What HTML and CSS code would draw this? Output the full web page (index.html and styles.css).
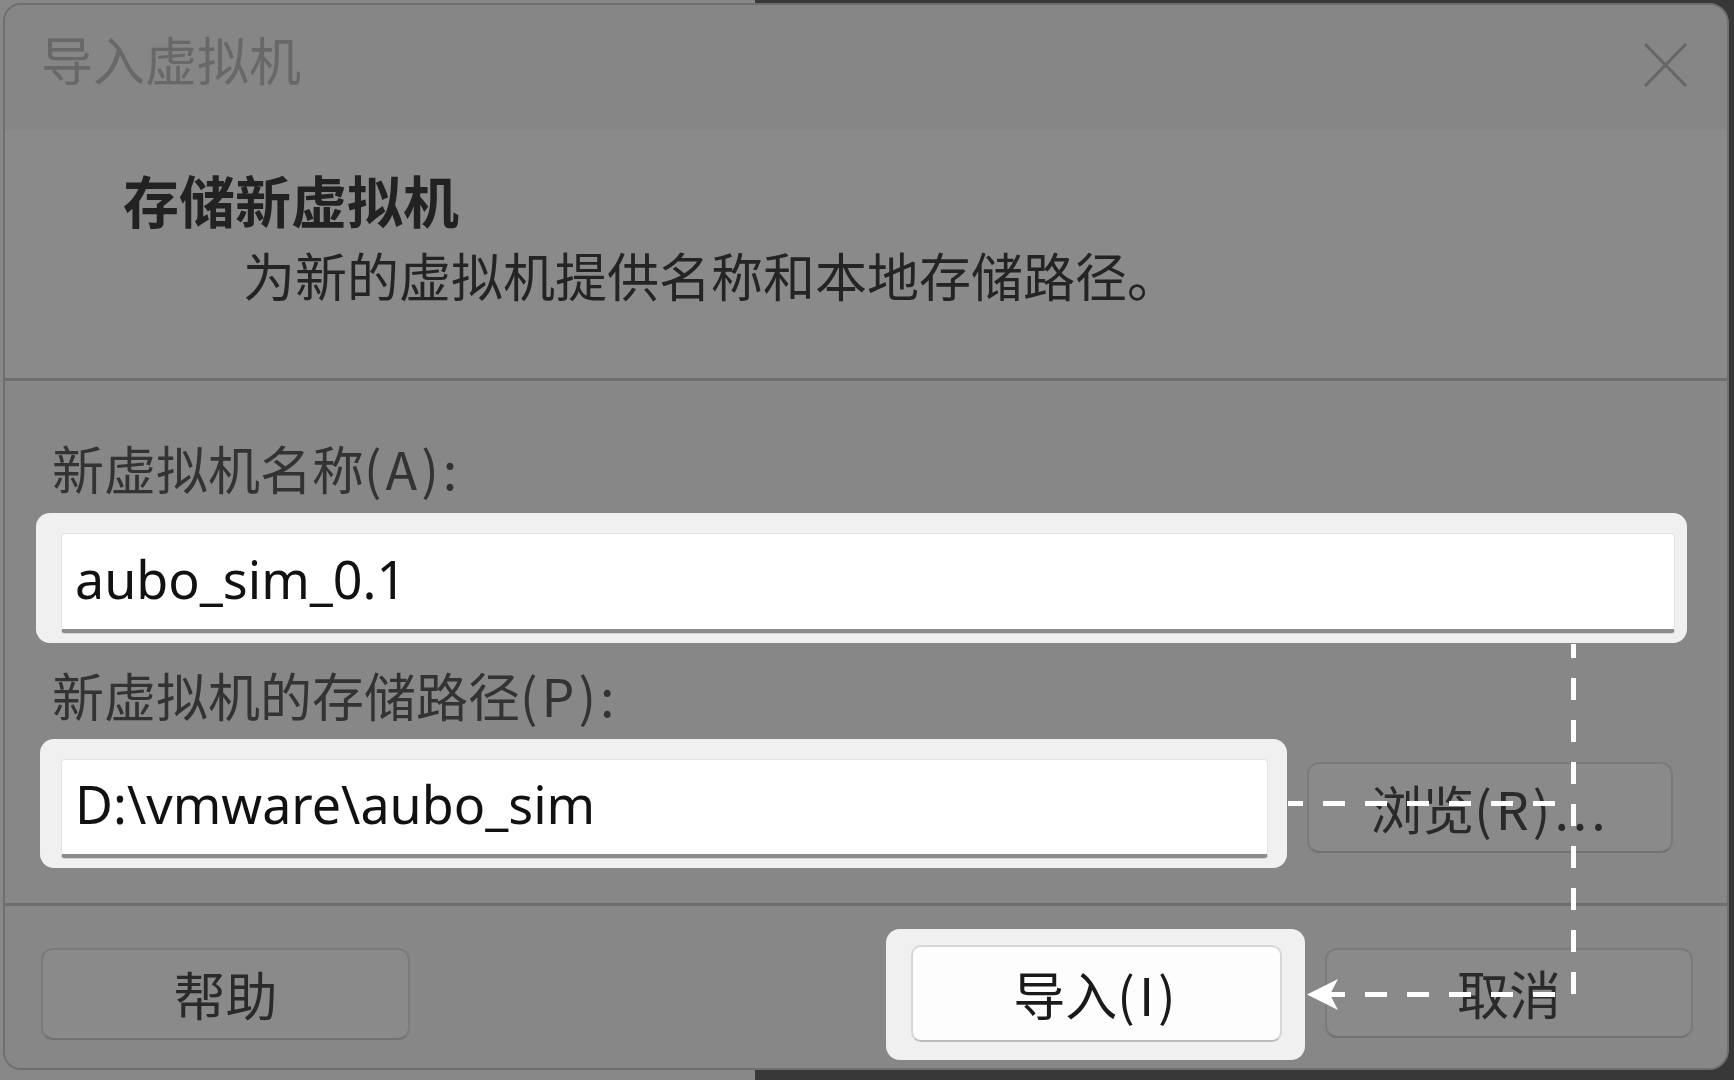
FILE: index.html
```html
<!DOCTYPE html>
<html lang="zh-CN">
<head>
<meta charset="utf-8">
<title>导入虚拟机</title>
<link rel="stylesheet" href="styles.css">
</head>
<body>
<div class="screen">
  <div class="dialog">
    <div class="titlebar">
      <span class="title">导入虚拟机</span>
      <svg class="close" width="45" height="44" viewBox="0 0 45 44"><path d="M2 1 L43 43 M43 1 L2 43" stroke="#666" stroke-width="3" fill="none"/></svg>
    </div>
    <div class="header">
      <div class="heading">存储新虚拟机</div>
      <div class="sub">为新的虚拟机提供名称和本地存储路径。</div>
    </div>
    <div class="content">
      <div class="label">新虚拟机名称<span class="key">(A):</span></div>
      <div class="hl hl-name"><div class="input">aubo_sim_0.1</div></div>
      <div class="label label-path">新虚拟机的存储路径<span class="key">(P):</span></div>
      <div class="path-row">
        <div class="hl hl-path"><div class="input">D:\vmware\aubo_sim</div></div>
        <div class="btn btn-browse">浏览<span class="key">(R)...</span></div>
      </div>
    </div>
    <div class="footer">
      <div class="btn btn-help">帮助</div>
      <div class="hl hl-import"><div class="btn-primary">导入<span class="key">(I)</span></div></div>
      <div class="btn btn-cancel">取消</div>
    </div>
  </div>
  <svg class="annot" width="1734" height="1080" viewBox="0 0 1734 1080">
    <g stroke="#fff" stroke-width="5" fill="none">
      <path d="M1555 803.5 H1288" stroke-dasharray="22 20"/>
      <path d="M1573.5 644 V994" stroke-dasharray="22 20" stroke-dashoffset="8"/>
      <path d="M1555 994.5 H1320" stroke-dasharray="22 20"/>
    </g>
    <path d="M1307 994.5 L1338 979 L1330 994.5 L1338 1010 Z" fill="#fff"/>
  </svg>
</div>
</body>
</html>
```
FILE: styles.css
```css
html, body {
  margin: 0;
  padding: 0;
}
body {
  width: 1734px;
  height: 1080px;
  overflow: hidden;
  font-family: "Noto Sans CJK SC", "Noto Sans", sans-serif;
}
.screen {
  position: relative;
  width: 1734px;
  height: 1080px;
  box-sizing: border-box;
  padding: 3px 0 0 3px;
  background: linear-gradient(90deg, #888888 0, #888888 755px, #383838 755px);
}
.dialog {
  width: 1726px;
  height: 1067px;
  box-sizing: border-box;
  border: 2px solid #6f6f6f;
  border-radius: 18px 20px 20px 18px;
  background: #878787;
  overflow: hidden;
  display: flex;
  flex-direction: column;
}
.titlebar {
  height: 125px;
  box-sizing: border-box;
  padding: 28px 39px 0 36px;
  display: flex;
  justify-content: space-between;
  align-items: flex-start;
  background: #868686;
}
.title {
  font-size: 52px;
  line-height: 52px;
  color: #686868;
}
.close {
  margin-top: 10px;
  display: block;
}
.header {
  padding: 41px 0 0 118px;
  box-sizing: border-box;
  height: 251px;
  background: #8a8a8a;
  border-bottom: 3px solid #6e6e6e;
}
.heading {
  font-size: 56px;
  line-height: 56px;
  font-weight: 700;
  color: #222;
}
.sub {
  margin: 22px 0 0 120px;
  font-size: 52px;
  line-height: 52px;
  color: #242424;
}
.content {
  padding: 61px 0 0 31px;
  height: 522px;
  box-sizing: border-box;
  background: #878787;
}
.label {
  margin-left: 16px;
  font-size: 52px;
  line-height: 52px;
  color: #333;
}
.key {
  letter-spacing: 4px;
}
.label-path {
  margin-top: 26px;
}
.hl {
  background: #f0f0f0;
  border-radius: 14px;
  box-sizing: border-box;
}
.hl-name {
  margin-top: 19px;
  width: 1651px;
  height: 130px;
  padding: 20px 12px 10px 25px;
}
.path-row {
  margin-top: 18px;
  margin-left: 4px;
  display: flex;
  align-items: flex-start;
}
.hl-path {
  width: 1247px;
  height: 129px;
  padding: 20px 19px 10px 21px;
}
.input {
  height: 100%;
  box-sizing: border-box;
  background: #fff;
  border: 1px solid #e4e4e4;
  border-bottom: 4px solid #8c8c8c;
  border-radius: 4px;
  box-shadow: 0 1px 0 #d2d2d2;
  padding: 0 0 6px 13px;
  display: flex;
  align-items: center;
  font-family: "Noto Sans", sans-serif;
  font-size: 52px;
  line-height: 68px;
  color: #111;
  white-space: pre;
}
.btn {
  box-sizing: border-box;
  border: 2px solid #7a7a7a;
  border-bottom-color: #727272;
  border-radius: 12px;
  background: #8a8a8a;
  display: flex;
  align-items: center;
  justify-content: center;
  font-size: 52px;
  line-height: 52px;
  color: #2a2a2a;
}
.btn-browse {
  margin: 23px 0 0 20px;
  width: 366px;
  height: 91px;
}
.footer {
  flex: 1;
  border-top: 3px solid #6e6e6e;
  padding: 23px 34px 0 36px;
  display: flex;
  align-items: flex-start;
  background: #878787;
}
.btn-help {
  margin-top: 19px;
  width: 369px;
  height: 92px;
}
.hl-import {
  margin-left: auto;
  width: 419px;
  height: 131px;
  padding: 16px 23px 18px 25px;
}
.btn-primary {
  height: 100%;
  box-sizing: border-box;
  background: #fdfdfd;
  border: 2px solid #d6d6d6;
  border-bottom-color: #bcbcbc;
  border-radius: 10px;
  display: flex;
  align-items: center;
  justify-content: center;
  font-size: 52px;
  line-height: 52px;
  color: #1a1a1a;
}
.btn-cancel {
  margin: 19px 0 0 20px;
  width: 368px;
  height: 90px;
}
.annot {
  position: absolute;
  left: 0;
  top: 0;
  pointer-events: none;
}
```
